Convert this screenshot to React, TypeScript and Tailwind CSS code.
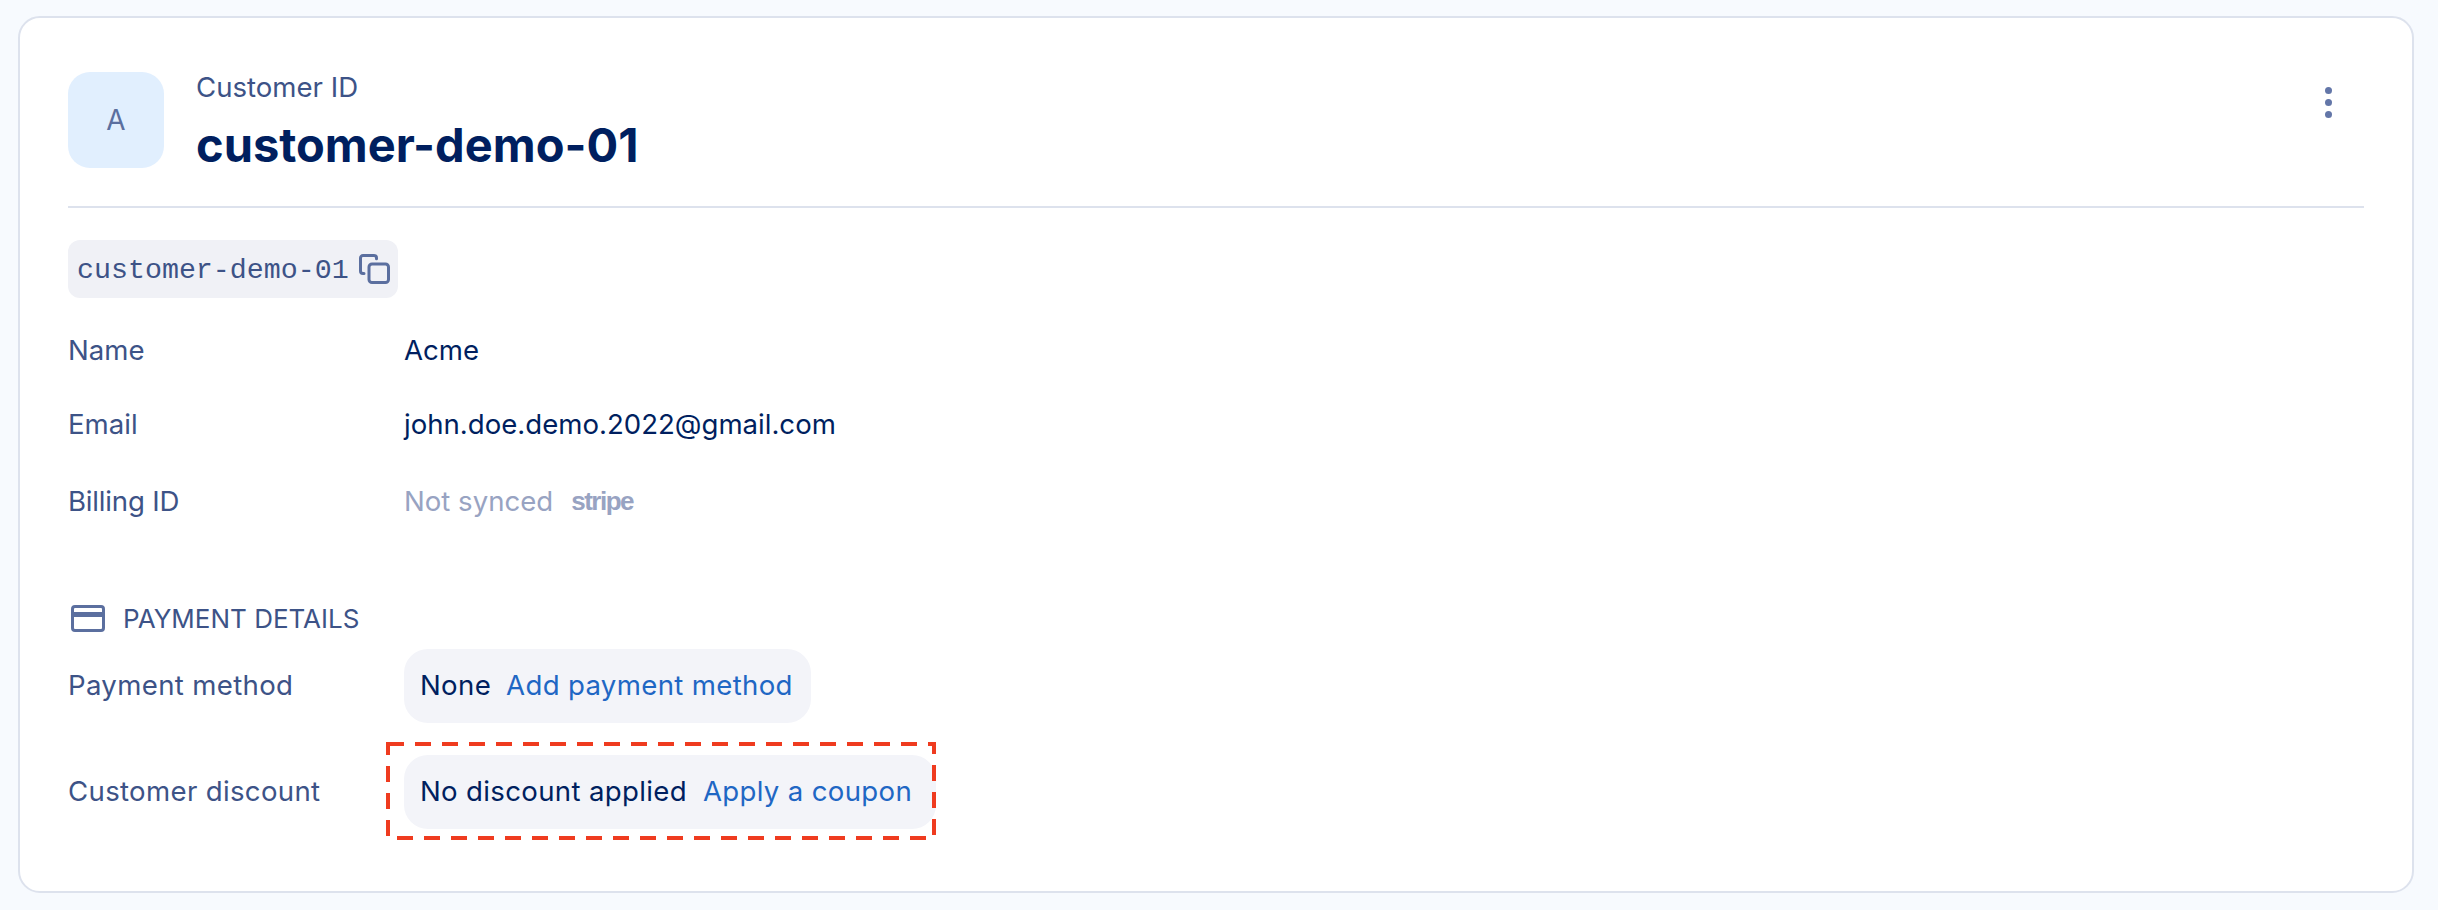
const sans = "font-['Inter','Noto_Sans',sans-serif]";

function CopyIcon() {
  return (
    <svg width="31" height="30" viewBox="0 0 31 30" fill="none" stroke="#5b6f9f" strokeWidth="3" className="shrink-0">
      <path d="M5 19.5H4a2.5 2.5 0 0 1-2.5-2.5V4A2.5 2.5 0 0 1 4 1.500h11A2.500 2.500 0 0 1 17.500 4v.8" strokeLinecap="round" />
      <rect x="10" y="10" width="19.500" height="18.500" rx="3" />
    </svg>
  );
}

function CardIcon() {
  return (
    <svg width="34" height="27" viewBox="0 0 34 27" className="shrink-0">
      <rect x="1.500" y="1.500" width="31" height="24" rx="2.500" fill="none" stroke="#5b6f9f" strokeWidth="3" />
      <rect x="2" y="7" width="30" height="5" fill="#5b6f9f" />
    </svg>
  );
}

function Row({ label, className, children }: { label: string; className: string; children: React.ReactNode }) {
  return (
    <div className={`flex items-center ${className}`}>
      <div className="w-[336px] shrink-0 text-[#3d5387]">{label}</div>
      {children}
    </div>
  );
}

export default function App() {
  return (
    <main className={`h-[910px] bg-[#f7fafe] pt-4 pr-6 pl-[18px] text-[27.600px] ${sans}`}>
      <div className="h-[877px] rounded-[22px] border-2 border-[#dde2ed] bg-white px-12 pt-[54px]">
        {/* header */}
        <div className="flex h-[136px] items-start justify-between border-b-2 border-[#dde2ed]">
          <div className="flex gap-8">
            <div className="flex h-24 w-24 items-center justify-center rounded-[22px] bg-[#e1effe] text-[28px] text-[#5b6f9f]">
              A
            </div>
            <div>
              <p className="text-[27.600px] leading-[30px] text-[#3d5387]">Customer ID</p>
              <h1 className="mt-[15px] text-[47px] leading-[56px] font-bold text-[#001f5f]">customer-demo-01</h1>
            </div>
          </div>
          <div className="mt-[15px] mr-8 flex flex-col gap-[5px]">
            <span className="h-[7px] w-[7px] rounded-full bg-[#6376a8]" />
            <span className="h-[7px] w-[7px] rounded-full bg-[#6376a8]" />
            <span className="h-[7px] w-[7px] rounded-full bg-[#6376a8]" />
          </div>
        </div>

        {/* id chip */}
        <div className="mt-8 flex h-[58px] w-[330px] items-center gap-[10px] rounded-xl bg-[#f0f1f6] pl-[9px] font-['Liberation_Mono',monospace] text-[28.300px] text-[#3d5387]">
          <span className="translate-y-[1px]">customer-demo-01</span>
          <CopyIcon />
        </div>

        <Row label="Name" className="mt-[35px] h-9">
          <span className="text-[#001f5f]">Acme</span>
        </Row>
        <Row label="Email" className="mt-[38px] h-9">
          <span className="text-[#001f5f]">john.doe.demo.2022@gmail.com</span>
        </Row>
        <Row label="Billing ID" className="mt-[41px] h-9 tracking-[-0.200px]">
          <span className="tracking-normal text-[#98a3c2]">Not synced</span>
          <span className="ml-[18px] -translate-y-[1px] font-['Liberation_Sans',sans-serif] text-[26px] font-bold tracking-[-1.500px] text-[#98a3c2]">
            stripe
          </span>
        </Row>

        {/* payment details */}
        <div className="mt-[80px] flex h-9 items-center gap-[18px] text-[26px] text-[#3d5387] uppercase">
          <span className="ml-[3px]">
            <CardIcon />
          </span>
          Payment details
        </div>

        <Row label="Payment method" className="mt-[13px] tracking-[0.330px]">
          <div className="flex h-[74px] items-center gap-[15px] rounded-3xl bg-[#f3f4f9] pr-[18px] pl-4">
            <span className="text-[#001f5f]">None</span>
            <span className="text-[#1f67c4]">Add payment method</span>
          </div>
        </Row>
        <Row label="Customer discount" className="mt-8 tracking-[0.330px]">
          <div className="relative flex h-[74px] items-center gap-4 rounded-3xl bg-[#f3f4f9] pr-6 pl-4">
            <span className="text-[#001f5f]">No discount applied</span>
            <span className="text-[#1f67c4]">Apply a coupon</span>
            {/* annotation */}
            <svg width="550" height="98" viewBox="0 0 550 98" fill="none" className="absolute -top-[13px] -left-[18px]">
              <rect x="2" y="2" width="546" height="94" stroke="#ef3b1f" strokeWidth="4" strokeDasharray="16 11" />
            </svg>
          </div>
        </Row>
      </div>
    </main>
  );
}
